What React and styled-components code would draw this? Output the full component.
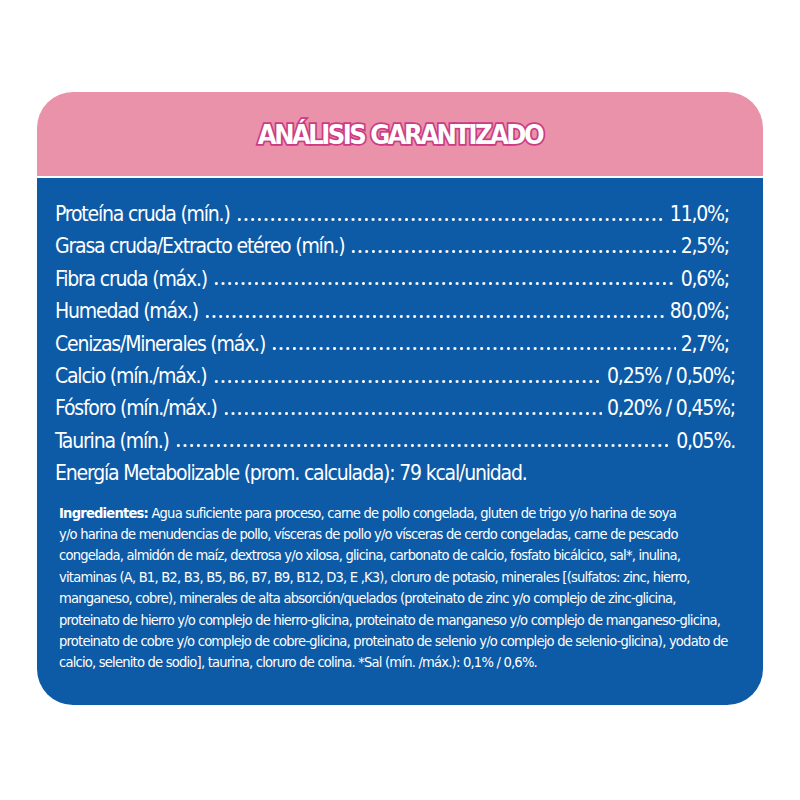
import React from "react";
import styled, { createGlobalStyle } from "styled-components";

const Global = createGlobalStyle`
  html, body { margin: 0; padding: 0; background: #ffffff; }
  body { width: 800px; height: 800px; overflow: hidden; }
`;

const FONT = `"Liberation Sans Narrow", "DejaVu Sans Condensed", "Liberation Sans", sans-serif`;

const Page = styled.div`
  padding: 92px 37px 0 37px;
  font-family: ${FONT};
`;

const Card = styled.section`
  display: flex;
  flex-direction: column;
  gap: 2px;
  width: 726px;
`;

const Header = styled.header`
  height: 84px;
  background: #e992a9;
  border-radius: 36px 36px 0 0;
  display: flex;
  align-items: center;
  justify-content: center;
`;

const Title = styled.h1`
  margin: 0;
  font-family: ${FONT};
  font-weight: 700;
  font-size: 27px;
  letter-spacing: -2.5px;
  color: #ffffff;
  -webkit-text-stroke: 3.5px #cc3b84;
  paint-order: stroke fill;
  line-height: 1;
`;

const Body = styled.div`
  background: #0d5aa7;
  border-radius: 0 0 36px 36px;
  height: 527px;
  box-sizing: border-box;
  padding: 20px 30px 0 18px;
  color: #ffffff;
`;

const Rows = styled.div`
  display: flex;
  flex-direction: column;
`;

const Row = styled.div`
  display: flex;
  align-items: baseline;
  height: 32.4px;
  line-height: 32.4px;
  font-size: 21px;
  letter-spacing: -1.2px;
  white-space: nowrap;
`;

const Label = styled.span`
  flex: none;
`;

const Leader = styled.span`
  flex: 1;
  height: 3.4px;
  margin: 0 5px 0 6px;
  background-image: radial-gradient(circle, #ffffff 1.35px, transparent 1.7px);
  background-size: 6.7px 3.4px;
  background-repeat: repeat-x;
  background-position: 0 0;
`;

const Value = styled.span`
  flex: none;
  margin-right: ${(p) => p.$shift || 0}px;
`;

const Ingredients = styled.div`
  margin-top: 12px;
  padding-left: 4px;
  font-size: 14.6px;
  letter-spacing: -0.8px;
  line-height: 21.4px;
  white-space: nowrap;
`;

const Line = styled.div``;

const Strong = styled.strong`
  font-weight: 700;
`;

const rows = [
  ["Proteína cruda (mín.)", "11,0%;", 4],
  ["Grasa cruda/Extracto etéreo (mín.)", "2,5%;", 4],
  ["Fibra cruda (máx.)", "0,6%;", 4],
  ["Humedad (máx.)", "80,0%;", 4],
  ["Cenizas/Minerales (máx.)", "2,7%;", 4],
  ["Calcio (mín./máx.)", "0,25% / 0,50%;", -2],
  ["Fósforo (mín./máx.)", "0,20% / 0,45%;", -2],
  ["Taurina (mín.)", "0,05%.", -2],
];

const lines = [
  "y/o harina de menudencias de pollo, vísceras de pollo y/o vísceras de cerdo congeladas, carne de pescado",
  "congelada, almidón de maíz, dextrosa y/o xilosa, glicina, carbonato de calcio, fosfato bicálcico, sal*, inulina,",
  "vitaminas (A, B1, B2, B3, B5, B6, B7, B9, B12, D3, E ,K3), cloruro de potasio, minerales [(sulfatos: zinc, hierro,",
  "manganeso, cobre), minerales de alta absorción/quelados (proteinato de zinc y/o complejo de zinc-glicina,",
  "proteinato de hierro y/o complejo de hierro-glicina, proteinato de manganeso y/o complejo de manganeso-glicina,",
  "proteinato de cobre y/o complejo de cobre-glicina, proteinato de selenio y/o complejo de selenio-glicina), yodato de",
  "calcio, selenito de sodio], taurina, cloruro de colina. *Sal (mín. /máx.): 0,1% / 0,6%.",
];

export default function App() {
  return (
    <>
      <Global />
      <Page>
        <Card>
          <Header>
            <Title>ANÁLISIS GARANTIZADO</Title>
          </Header>
          <Body>
            <Rows>
              {rows.map(([l, v, s]) => (
                <Row key={l}>
                  <Label>{l}</Label>
                  <Leader />
                  <Value $shift={s}>{v}</Value>
                </Row>
              ))}
              <Row>
                <Label>Energía Metabolizable (prom. calculada): 79 kcal/unidad.</Label>
              </Row>
            </Rows>
            <Ingredients>
              <Line>
                <Strong>Ingredientes:</Strong> Agua suficiente para proceso, carne de pollo congelada, gluten de trigo y/o harina de soya
              </Line>
              {lines.map((t) => (
                <Line key={t}>{t}</Line>
              ))}
            </Ingredients>
          </Body>
        </Card>
      </Page>
    </>
  );
}
